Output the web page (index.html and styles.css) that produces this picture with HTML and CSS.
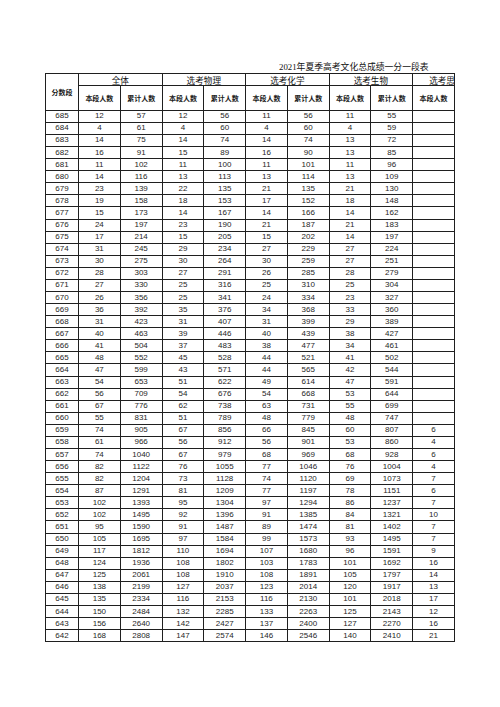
FILE: index.html
```html
<!DOCTYPE html>
<html lang="zh-CN">
<head>
<meta charset="utf-8">
<title>2021年夏季高考文化总成绩一分一段表</title>
<link rel="stylesheet" href="styles.css">
</head>
<body>
<div class="page">
  <div class="title">2021年夏季高考文化总成绩一分一段表</div>
  <table class="grid">
    <colgroup>
      <col class="c-score">
      <col><col><col><col><col><col><col><col><col>
    </colgroup>
    <thead>
      <tr class="r-group">
        <th rowspan="2" class="score-head">分数段</th>
        <th colspan="2" class="group">全体</th>
        <th colspan="2" class="group">选考物理</th>
        <th colspan="2" class="group">选考化学</th>
        <th colspan="2" class="group">选考生物</th>
        <th class="group cut">选考思想政治</th>
      </tr>
      <tr class="r-sub">
        <th class="sub">本段人数</th><th class="sub">累计人数</th>
        <th class="sub">本段人数</th><th class="sub">累计人数</th>
        <th class="sub">本段人数</th><th class="sub">累计人数</th>
        <th class="sub">本段人数</th><th class="sub">累计人数</th>
        <th class="sub">本段人数</th>
      </tr>
    </thead>
    <tbody>
      <tr><td>685</td><td>12</td><td>57</td><td>12</td><td>56</td><td>11</td><td>56</td><td>11</td><td>55</td><td></td></tr>
      <tr><td>684</td><td>4</td><td>61</td><td>4</td><td>60</td><td>4</td><td>60</td><td>4</td><td>59</td><td></td></tr>
      <tr><td>683</td><td>14</td><td>75</td><td>14</td><td>74</td><td>14</td><td>74</td><td>13</td><td>72</td><td></td></tr>
      <tr><td>682</td><td>16</td><td>91</td><td>15</td><td>89</td><td>16</td><td>90</td><td>13</td><td>85</td><td></td></tr>
      <tr><td>681</td><td>11</td><td>102</td><td>11</td><td>100</td><td>11</td><td>101</td><td>11</td><td>96</td><td></td></tr>
      <tr><td>680</td><td>14</td><td>116</td><td>13</td><td>113</td><td>13</td><td>114</td><td>13</td><td>109</td><td></td></tr>
      <tr><td>679</td><td>23</td><td>139</td><td>22</td><td>135</td><td>21</td><td>135</td><td>21</td><td>130</td><td></td></tr>
      <tr><td>678</td><td>19</td><td>158</td><td>18</td><td>153</td><td>17</td><td>152</td><td>18</td><td>148</td><td></td></tr>
      <tr><td>677</td><td>15</td><td>173</td><td>14</td><td>167</td><td>14</td><td>166</td><td>14</td><td>162</td><td></td></tr>
      <tr><td>676</td><td>24</td><td>197</td><td>23</td><td>190</td><td>21</td><td>187</td><td>21</td><td>183</td><td></td></tr>
      <tr><td>675</td><td>17</td><td>214</td><td>15</td><td>205</td><td>15</td><td>202</td><td>14</td><td>197</td><td></td></tr>
      <tr><td>674</td><td>31</td><td>245</td><td>29</td><td>234</td><td>27</td><td>229</td><td>27</td><td>224</td><td></td></tr>
      <tr><td>673</td><td>30</td><td>275</td><td>30</td><td>264</td><td>30</td><td>259</td><td>27</td><td>251</td><td></td></tr>
      <tr><td>672</td><td>28</td><td>303</td><td>27</td><td>291</td><td>26</td><td>285</td><td>28</td><td>279</td><td></td></tr>
      <tr><td>671</td><td>27</td><td>330</td><td>25</td><td>316</td><td>25</td><td>310</td><td>25</td><td>304</td><td></td></tr>
      <tr><td>670</td><td>26</td><td>356</td><td>25</td><td>341</td><td>24</td><td>334</td><td>23</td><td>327</td><td></td></tr>
      <tr><td>669</td><td>36</td><td>392</td><td>35</td><td>376</td><td>34</td><td>368</td><td>33</td><td>360</td><td></td></tr>
      <tr><td>668</td><td>31</td><td>423</td><td>31</td><td>407</td><td>31</td><td>399</td><td>29</td><td>389</td><td></td></tr>
      <tr><td>667</td><td>40</td><td>463</td><td>39</td><td>446</td><td>40</td><td>439</td><td>38</td><td>427</td><td></td></tr>
      <tr><td>666</td><td>41</td><td>504</td><td>37</td><td>483</td><td>38</td><td>477</td><td>34</td><td>461</td><td></td></tr>
      <tr><td>665</td><td>48</td><td>552</td><td>45</td><td>528</td><td>44</td><td>521</td><td>41</td><td>502</td><td></td></tr>
      <tr><td>664</td><td>47</td><td>599</td><td>43</td><td>571</td><td>44</td><td>565</td><td>42</td><td>544</td><td></td></tr>
      <tr><td>663</td><td>54</td><td>653</td><td>51</td><td>622</td><td>49</td><td>614</td><td>47</td><td>591</td><td></td></tr>
      <tr><td>662</td><td>56</td><td>709</td><td>54</td><td>676</td><td>54</td><td>668</td><td>53</td><td>644</td><td></td></tr>
      <tr><td>661</td><td>67</td><td>776</td><td>62</td><td>738</td><td>63</td><td>731</td><td>55</td><td>699</td><td></td></tr>
      <tr><td>660</td><td>55</td><td>831</td><td>51</td><td>789</td><td>48</td><td>779</td><td>48</td><td>747</td><td></td></tr>
      <tr><td>659</td><td>74</td><td>905</td><td>67</td><td>856</td><td>66</td><td>845</td><td>60</td><td>807</td><td>6</td></tr>
      <tr><td>658</td><td>61</td><td>966</td><td>56</td><td>912</td><td>56</td><td>901</td><td>53</td><td>860</td><td>4</td></tr>
      <tr><td>657</td><td>74</td><td>1040</td><td>67</td><td>979</td><td>68</td><td>969</td><td>68</td><td>928</td><td>6</td></tr>
      <tr><td>656</td><td>82</td><td>1122</td><td>76</td><td>1055</td><td>77</td><td>1046</td><td>76</td><td>1004</td><td>4</td></tr>
      <tr><td>655</td><td>82</td><td>1204</td><td>73</td><td>1128</td><td>74</td><td>1120</td><td>69</td><td>1073</td><td>7</td></tr>
      <tr><td>654</td><td>87</td><td>1291</td><td>81</td><td>1209</td><td>77</td><td>1197</td><td>78</td><td>1151</td><td>6</td></tr>
      <tr><td>653</td><td>102</td><td>1393</td><td>95</td><td>1304</td><td>97</td><td>1294</td><td>86</td><td>1237</td><td>7</td></tr>
      <tr><td>652</td><td>102</td><td>1495</td><td>92</td><td>1396</td><td>91</td><td>1385</td><td>84</td><td>1321</td><td>10</td></tr>
      <tr><td>651</td><td>95</td><td>1590</td><td>91</td><td>1487</td><td>89</td><td>1474</td><td>81</td><td>1402</td><td>7</td></tr>
      <tr><td>650</td><td>105</td><td>1695</td><td>97</td><td>1584</td><td>99</td><td>1573</td><td>93</td><td>1495</td><td>7</td></tr>
      <tr><td>649</td><td>117</td><td>1812</td><td>110</td><td>1694</td><td>107</td><td>1680</td><td>96</td><td>1591</td><td>9</td></tr>
      <tr><td>648</td><td>124</td><td>1936</td><td>108</td><td>1802</td><td>103</td><td>1783</td><td>101</td><td>1692</td><td>16</td></tr>
      <tr><td>647</td><td>125</td><td>2061</td><td>108</td><td>1910</td><td>108</td><td>1891</td><td>105</td><td>1797</td><td>14</td></tr>
      <tr><td>646</td><td>138</td><td>2199</td><td>127</td><td>2037</td><td>123</td><td>2014</td><td>120</td><td>1917</td><td>13</td></tr>
      <tr><td>645</td><td>135</td><td>2334</td><td>116</td><td>2153</td><td>116</td><td>2130</td><td>101</td><td>2018</td><td>17</td></tr>
      <tr><td>644</td><td>150</td><td>2484</td><td>132</td><td>2285</td><td>133</td><td>2263</td><td>125</td><td>2143</td><td>12</td></tr>
      <tr><td>643</td><td>156</td><td>2640</td><td>142</td><td>2427</td><td>137</td><td>2400</td><td>127</td><td>2270</td><td>16</td></tr>
      <tr><td>642</td><td>168</td><td>2808</td><td>147</td><td>2574</td><td>146</td><td>2546</td><td>140</td><td>2410</td><td>21</td></tr>
    </tbody>
  </table>
</div>
</body>
</html>
```

FILE: styles.css
```css
html, body {
  margin: 0;
  padding: 0;
  background: #ffffff;
}

body {
  font-family: "Liberation Sans", Arial, "Noto Sans CJK SC", sans-serif;
  color: #222222;
}

.page {
  padding: 62px 0 0 45px;
}

.title {
  height: 10.5px;
  line-height: 10px;
  padding-left: 234px;
  font-family: "Liberation Serif", "Noto Sans CJK SC", serif;
  font-size: 8.8px;
  color: #111111;
  white-space: nowrap;
}

.grid {
  border-collapse: collapse;
  table-layout: fixed;
  width: 410px;
}

.c-score {
  width: 33px;
}

.grid th,
.grid td {
  border: 1px solid #1f1f1f;
  padding: 0;
  text-align: center;
  white-space: nowrap;
  overflow: hidden;
}

.r-group {
  height: 12.3px;
}

.r-sub {
  height: 25px;
}

.grid tbody tr {
  height: 12.09px;
}

.grid td {
  font-size: 8px;
  line-height: 8px;
  color: #262626;
  vertical-align: middle;
}

.group {
  font-family: "Noto Sans CJK SC", sans-serif;
  font-weight: 400;
  font-size: 8.6px;
  line-height: 9px;
  vertical-align: bottom;
  color: #111111;
}

.group.cut {
  text-align: left;
  padding-left: 16px;
  text-overflow: clip;
}

.score-head,
.sub {
  font-family: "Noto Sans CJK SC", sans-serif;
  font-weight: 700;
  font-size: 7px;
  line-height: 8px;
  vertical-align: middle;
  color: #1a1a1a;
}
```
